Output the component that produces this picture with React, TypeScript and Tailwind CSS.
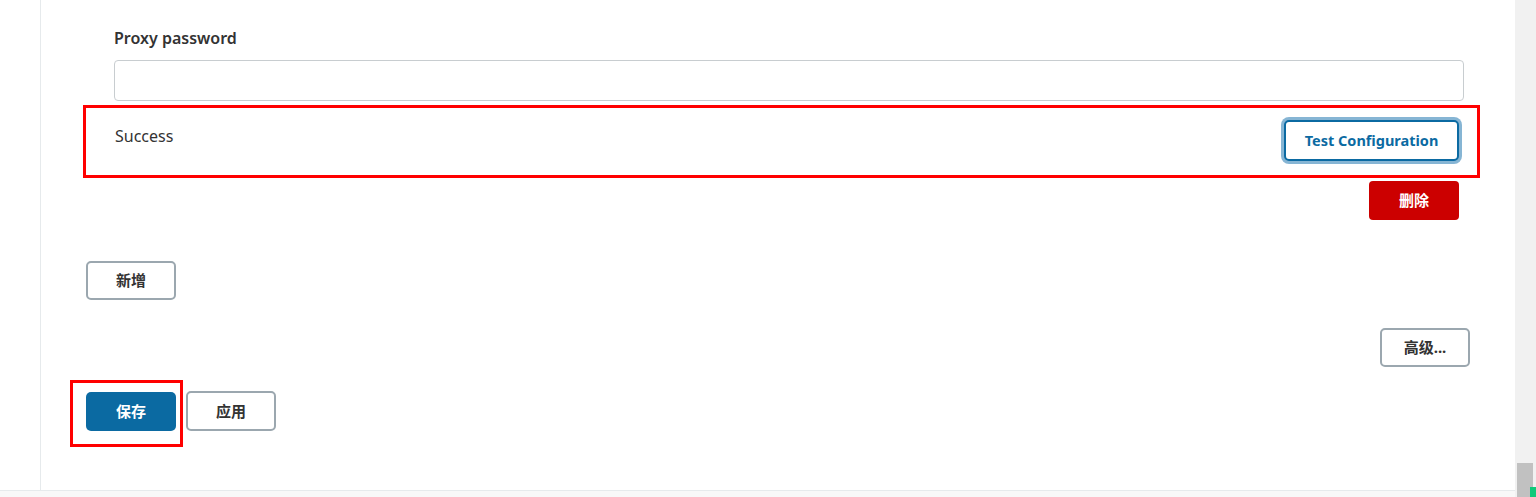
import React from 'react';

const font = { fontFamily: '"Noto Sans", "Noto Sans CJK SC", sans-serif' };

export default function App() {
  return (
    <div className="flex h-[497px] w-full overflow-hidden bg-white text-[#333]" style={font}>
      <div className="flex flex-1 flex-col">
        <div className="flex flex-1">
          {/* side nav edge */}
          <div className="w-[41px] shrink-0 border-r border-[#e6eaec]" />

          <div className="flex flex-1 flex-col">
            {/* proxy password field */}
            <div className="ml-[73px] mr-[51px] pt-[27px]">
              <div className="text-[16px] font-semibold leading-[22px]">Proxy password</div>
              <input
                type="password"
                className="mt-[11px] block h-[41px] w-full rounded-[4px] border border-[#c8cdd0] bg-white px-3 outline-none"
              />
            </div>

            {/* validation row */}
            <div className="ml-[42px] mr-[35px] mt-[4px] flex h-[73px] items-start justify-between border-[3px] border-[#ff0000] pl-[29px] pr-[18px] pt-[12px]">
              <span className="mt-[5px] text-[16px] leading-[22px]">Success</span>
              <button className="h-[41px] w-[175px] rounded-[5px] border-2 border-[#0b6aa2] bg-white text-[14.5px] font-bold text-[#0b6aa2] ring-[3px] ring-[#86b5d4]">
                Test Configuration
              </button>
            </div>

            <div className="mr-[56px] mt-[3px] flex justify-end">
              <button className="h-[39px] w-[90px] rounded-[4px] bg-[#cc0000] text-[15px] font-bold text-white">
                删除
              </button>
            </div>

            <div className="ml-[45px] mt-[41px]">
              <button className="h-[39px] w-[90px] rounded-[5px] border-2 border-[#9ba7af] bg-white text-[15px] font-bold">
                新增
              </button>
            </div>

            <div className="mr-[45px] mt-[28px] flex justify-end">
              <button className="h-[39px] w-[90px] rounded-[5px] border-2 border-[#9ba7af] bg-white text-[15px] font-bold">
                高级...
              </button>
            </div>

            <div className="ml-[29px] mt-[13px] flex items-start">
              <div className="h-[67px] w-[113px] border-[3px] border-[#ff0000] pl-[13px] pt-[9px]">
                <button className="h-[39px] w-[90px] rounded-[5px] bg-[#0b6aa2] text-[15px] font-bold text-white">
                  保存
                </button>
              </div>
              <button className="ml-[3px] mt-[11px] h-[40px] w-[90px] rounded-[5px] border-2 border-[#9ba7af] bg-white text-[15px] font-bold">
                应用
              </button>
            </div>
          </div>
        </div>
        <div className="h-[7px] border-t border-[#e6eaec] bg-[#f8f8f8]" />
      </div>

      {/* scrollbar */}
      <div className="relative flex w-[21px] shrink-0 flex-col justify-end bg-[#f1f1f1]">
        <div className="ml-[2px] h-[34px] w-[16px] bg-[#c1c1c1]" />
        <div className="absolute bottom-0 right-0 h-[10px] w-[6px] bg-[#10c97a]" />
      </div>
    </div>
  );
}
